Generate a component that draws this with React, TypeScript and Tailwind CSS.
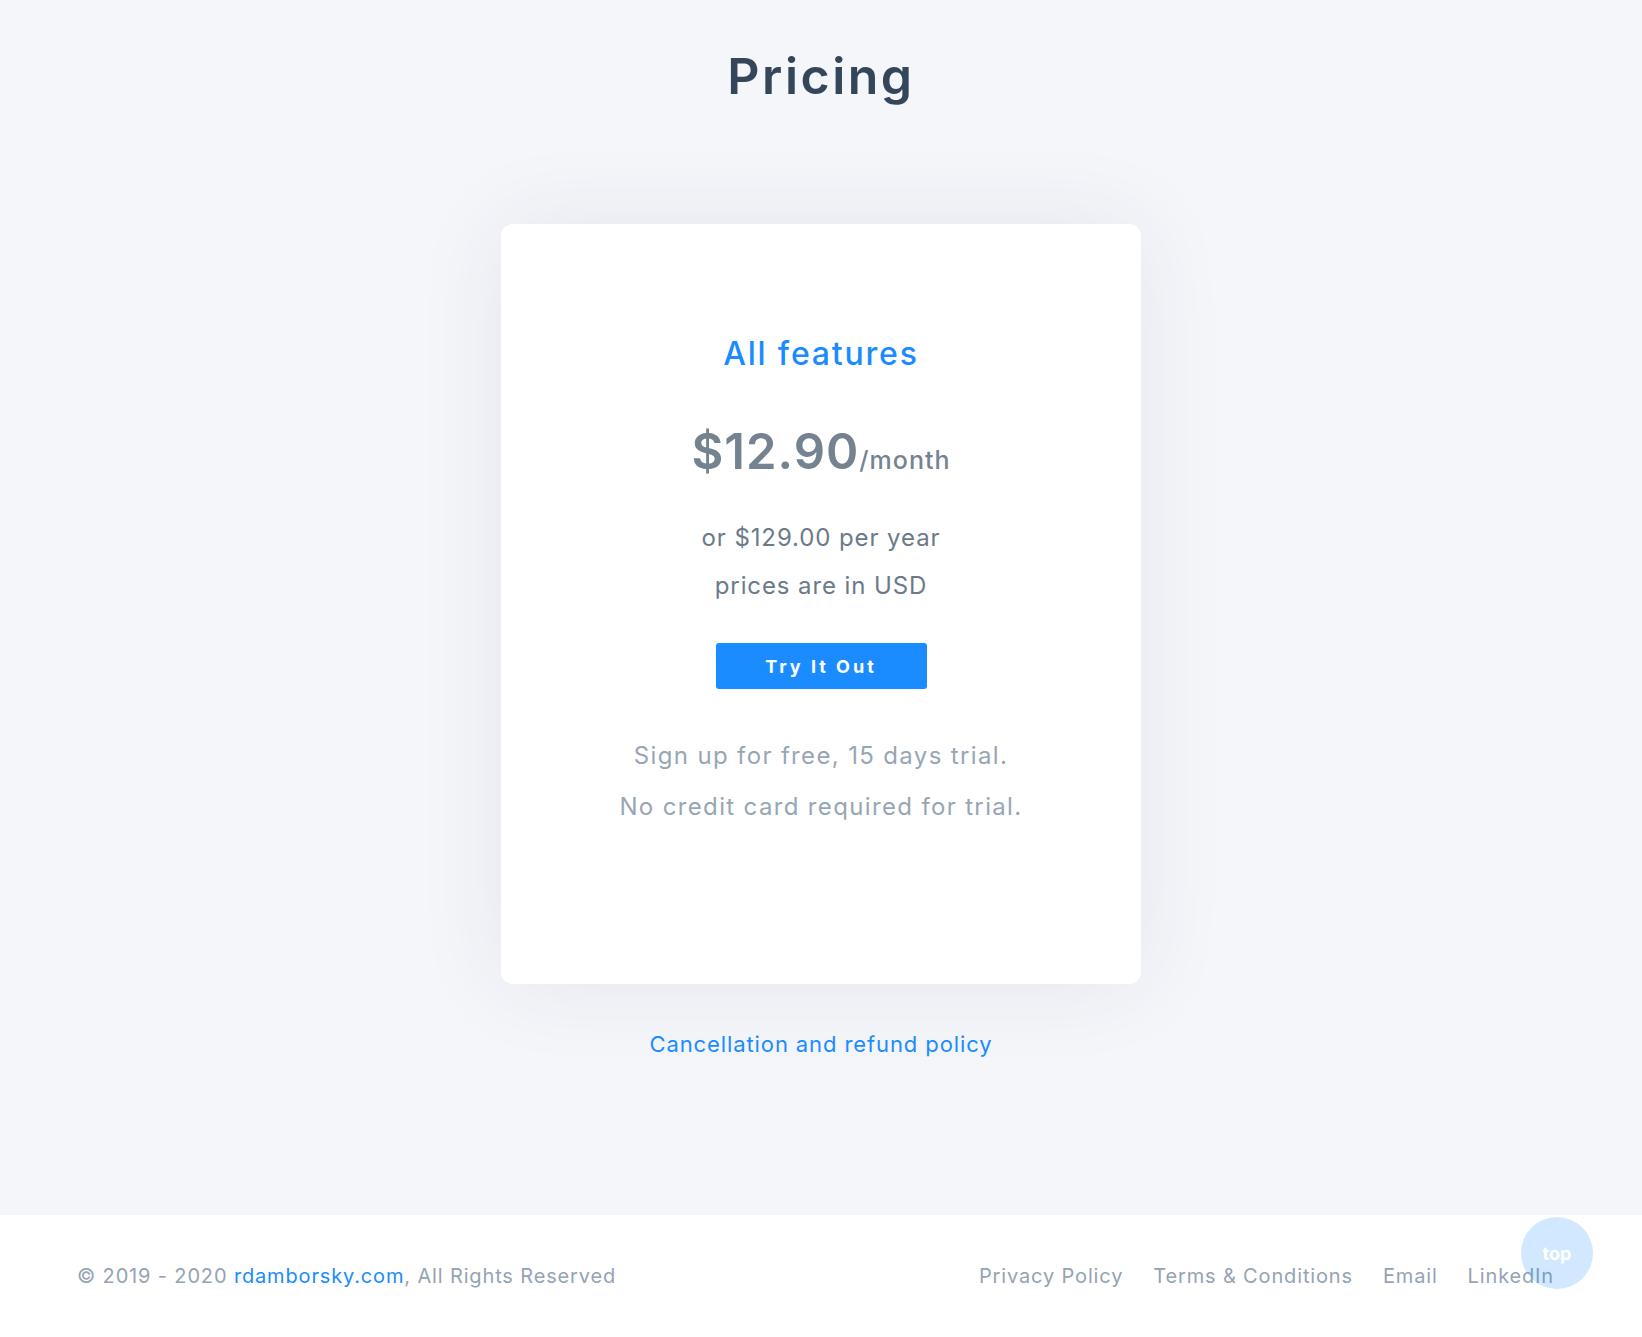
export default function App() {
    const links = ["Privacy Policy", "Terms & Conditions", "Email", "LinkedIn"];

    return (
        <div className="relative min-h-[1337px] w-full flex flex-col bg-[#f5f6fa] font-['Inter',sans-serif]">
            <main className="flex-1 flex flex-col items-center">
                <h1 className="mt-[47px] text-[50px] leading-[58px] font-semibold text-[#344659] tracking-[2.5px]">Pricing</h1>
                <div className="mt-[119px] w-[640px] h-[760px] bg-white rounded-[12px] shadow-[0_0_90px_rgba(40,50,90,0.08)] flex flex-col items-center pt-[110px]">
                    <h2 className="text-[32px] leading-[40px] font-medium text-[#1a8cff] tracking-[1.8px]">All features</h2>
                    <div className="mt-[49px] h-[58px] flex items-baseline text-[#758391]">
                        <span className="text-[49px] leading-[58px] font-semibold tracking-[1px]">$12.90</span>
                        <span className="text-[25px] font-medium tracking-[1px]">/month</span>
                    </div>
                    <div className="mt-[33px] text-[24px] leading-[48px] text-[#6b7a89] text-center tracking-[0.9px]">
                        <p>or $129.00 per year</p>
                        <p>prices are in USD</p>
                    </div>
                    <button className="mt-[33px] w-[211px] h-[46px] rounded-[3px] bg-[#1a8cff] text-white text-[18px] font-bold tracking-[3px]">Try It Out</button>
                    <div className="mt-[41px] text-[24px] leading-[51px] text-[#97a6b5] text-center tracking-[1.35px]">
                        <p>Sign up for free, 15 days trial.</p>
                        <p>No credit card required for trial.</p>
                    </div>
                </div>
                <a className="mt-[45px] text-[22px] leading-[30px] text-[#1a8cff] tracking-[0.9px]">Cancellation and refund policy</a>
            </main>
            <footer className="h-[122px] bg-white flex items-center justify-between pl-[77px] pr-[88px] text-[20px] text-[#95a3b3] tracking-[0.85px]">
                <p>© 2019 - 2020 <a className="text-[#1a8cff]">rdamborsky.com</a>, All Rights Reserved</p>
                <nav className="flex gap-[30px]">
                    {links.map((l) => (
                        <a key={l}>{l}</a>
                    ))}
                </nav>
            </footer>
            <button className="absolute right-[49px] bottom-[48px] w-[72px] h-[72px] rounded-full bg-[#1a8cff]/20 text-white text-[18px] font-bold flex items-center justify-center">top</button>
        </div>
    );
}
